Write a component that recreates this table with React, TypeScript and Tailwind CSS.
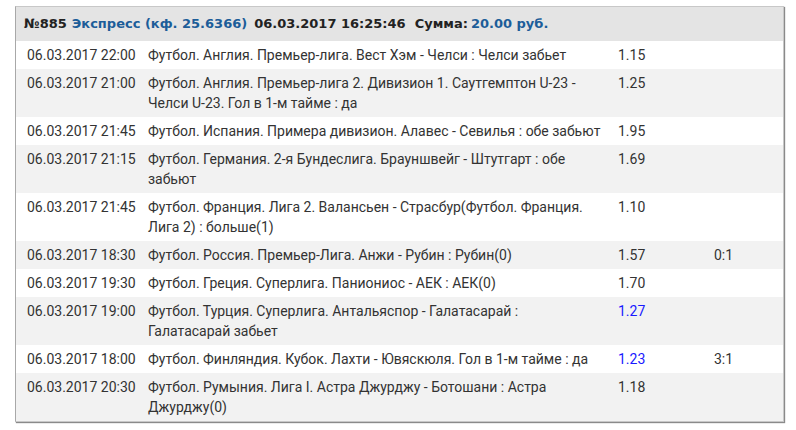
const rows = [
  { date: "06.03.2017 22:00", text: "Футбол. Англия. Премьер-лига. Вест Хэм - Челси : Челси забьет", coef: "1.15", blue: false, score: "" },
  { date: "06.03.2017 21:00", text: "Футбол. Англия. Премьер-лига 2. Дивизион 1. Саутгемптон U-23 - Челси U-23. Гол в 1-м тайме : да", coef: "1.25", blue: false, score: "" },
  { date: "06.03.2017 21:45", text: "Футбол. Испания. Примера дивизион. Алавес - Севилья : обе забьют", coef: "1.95", blue: false, score: "" },
  { date: "06.03.2017 21:15", text: "Футбол. Германия. 2-я Бундеслига. Брауншвейг - Штутгарт : обе забьют", coef: "1.69", blue: false, score: "" },
  { date: "06.03.2017 21:45", text: "Футбол. Франция. Лига 2. Валансьен - Страсбур(Футбол. Франция. Лига 2) : больше(1)", coef: "1.10", blue: false, score: "" },
  { date: "06.03.2017 18:30", text: "Футбол. Россия. Премьер-Лига. Анжи - Рубин : Рубин(0)", coef: "1.57", blue: false, score: "0:1" },
  { date: "06.03.2017 19:30", text: "Футбол. Греция. Суперлига. Паниониос - АЕК : АЕК(0)", coef: "1.70", blue: false, score: "" },
  { date: "06.03.2017 19:00", text: "Футбол. Турция. Суперлига. Антальяспор - Галатасарай : Галатасарай забьет", coef: "1.27", blue: true, score: "" },
  { date: "06.03.2017 18:00", text: "Футбол. Финляндия. Кубок. Лахти - Ювяскюля. Гол в 1-м тайме : да", coef: "1.23", blue: true, score: "3:1" },
  { date: "06.03.2017 20:30", text: "Футбол. Румыния. Лига I. Астра Джурджу - Ботошани : Астра Джурджу(0)", coef: "1.18", blue: false, score: "" },
];

export default function App() {
  return (
    <div className="w-[796px] h-[430px] bg-white pt-[6px] pl-[15px]">
      <div className="w-[769px] border border-[#c8c8c8] border-l-[#a8a8a8] shadow-[1px_1px_1px_#8a8a8a] bg-white">
        <div
          className="h-[34px] bg-[#e4e4e4] flex items-center pl-[8px] text-[13px] font-bold text-[#222]"
          style={{ fontFamily: "Verdana, 'DejaVu Sans', sans-serif" }}
        >
          <span>№885</span>
          <span className="ml-[5px] text-[#1c5d99]">Экспресс (кф. 25.6366)</span>
          <span className="ml-[7px]">06.03.2017 16:25:46</span>
          <span className="ml-[9px]">Сумма:</span>
          <span className="ml-[3px] text-[#1c5d99]">20.00 руб.</span>
        </div>
        <div className="text-[14px] leading-5 text-[#333]" style={{ fontFamily: "Roboto, 'Noto Sans', sans-serif" }}>
          {rows.map((r, i) => (
            <div
              key={i}
              className={`grid grid-cols-[132px_470px_96px_1fr] py-1 ${i % 2 === 1 ? "bg-[#f2f2f2]" : "bg-white"}`}
            >
              <div className="pl-[11px]">{r.date}</div>
              <div className="pr-[16px]">{r.text}</div>
              <div className={r.blue ? "text-[#1a1aff]" : ""}>{r.coef}</div>
              <div>{r.score}</div>
            </div>
          ))}
        </div>
      </div>
    </div>
  );
}
